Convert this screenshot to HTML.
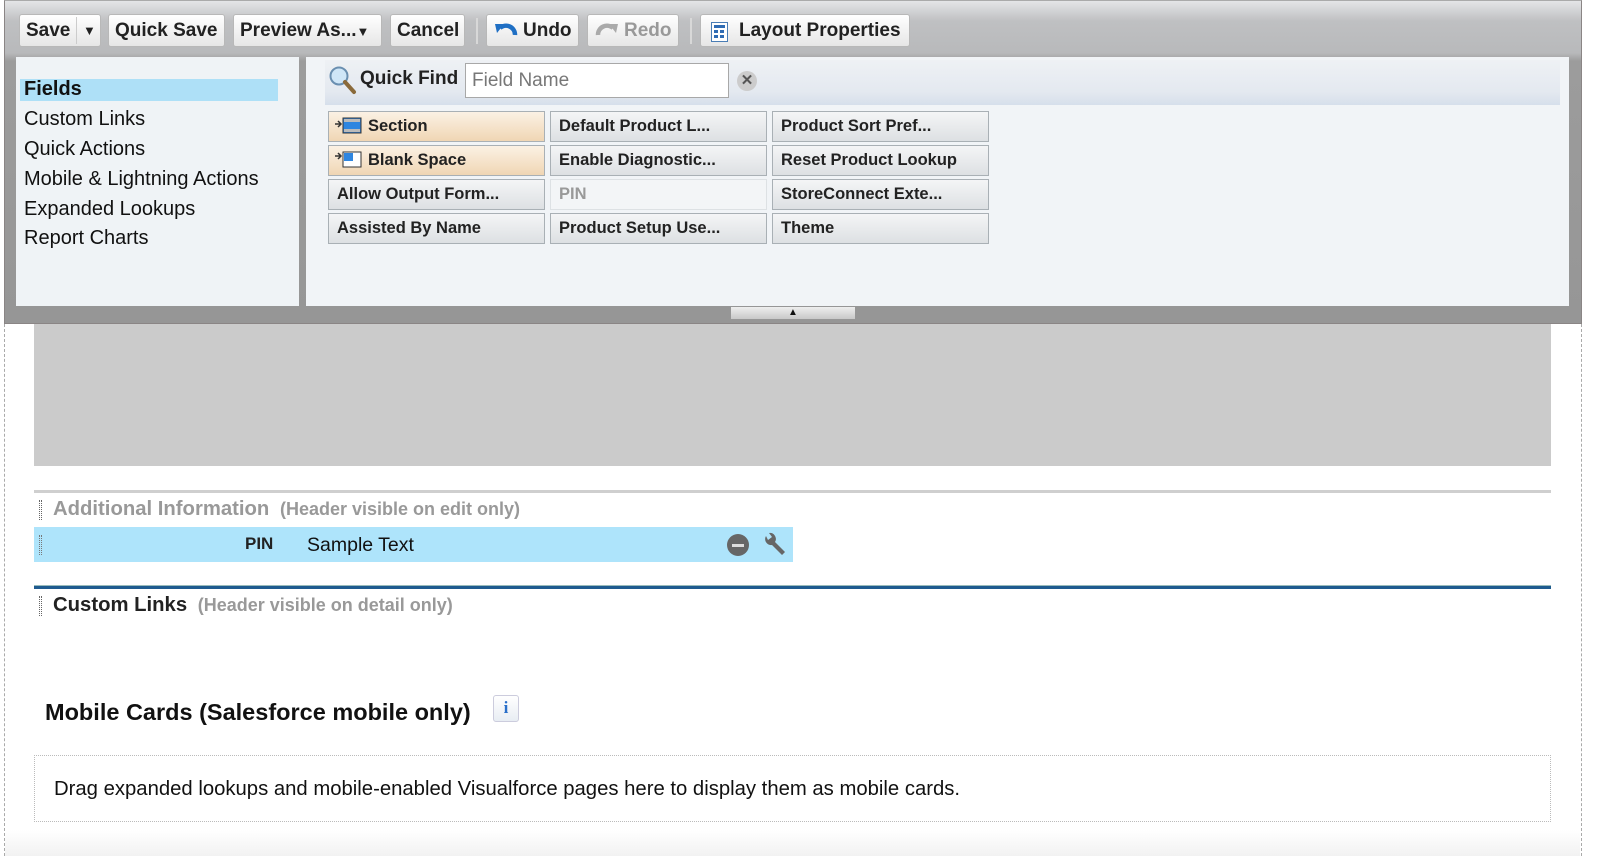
<!DOCTYPE html>
<html><head><meta charset="utf-8"><style>
*{box-sizing:border-box;margin:0;padding:0}
body{width:1600px;height:856px;background:#fff;font-family:"Liberation Sans",sans-serif;position:relative;overflow:hidden}
.a{position:absolute}
.frame{left:4px;top:0;width:1578px;height:324px;background:linear-gradient(#e4e5e7,#bfc0c2 20px,#b8b9bb 52px,#9c9c9c 60px,#969696);border:1px solid #8a8585;border-top-color:#aaa}
.btn{position:absolute;top:14px;height:33px;background:linear-gradient(#fff,#e6e6e6);border:1px solid #b8b8b8;border-radius:3px;font-weight:bold;font-size:19px;color:#222;line-height:31px;padding-left:6px;white-space:nowrap}
.lp{left:16px;top:57px;width:283px;height:249px;background:#eff3f6}
.rp{left:306px;top:57px;width:1263px;height:249px;background:#f1f4f7}
.li{position:absolute;left:24px;font-size:20px;color:#111}
.cell{position:absolute;width:217px;height:31px;border:1px solid #a9b0b5;background:linear-gradient(#f4f5f6,#dde0e3);font-weight:bold;font-size:16.5px;color:#222;line-height:29px;padding-left:8px;white-space:nowrap}
.or{background:linear-gradient(#fbf1e4,#f0d6b4)}
</style></head><body>
<div class="a frame"></div>
<div class="btn" style="left:19px;width:82px">Save<span style="position:absolute;left:56px;top:2px;width:1px;height:27px;background:#ccc"></span><span style="position:absolute;left:63px;font-size:13px">▼</span></div>
<div class="btn" style="left:108px;width:117px">Quick Save</div>
<div class="btn" style="left:233px;width:149px">Preview As...<span style="font-size:13px">▼</span></div>
<div class="btn" style="left:390px;width:75px">Cancel</div>
<div class="a" style="left:476px;top:18px;width:2px;height:26px;background:#d8d8d8"></div>
<div class="btn" style="left:486px;width:93px;padding-left:36px"><svg class="a" style="left:6px;top:6px" width="26" height="22" viewBox="0 0 26 22"><path d="M22 14 A9 9 0 0 0 7 7" stroke="#1f6fc4" stroke-width="4.5" fill="none"/><path d="M2 3 L11 3 L4 12 Z" fill="#1f6fc4"/></svg>Undo</div>
<div class="btn" style="left:587px;width:92px;padding-left:36px;color:#999"><svg class="a" style="left:6px;top:6px" width="26" height="22" viewBox="0 0 26 22"><path d="M4 14 A9 9 0 0 1 19 7" stroke="#aaa" stroke-width="4.5" fill="none"/><path d="M24 3 L15 3 L22 12 Z" fill="#aaa"/></svg>Redo</div>
<div class="a" style="left:690px;top:18px;width:2px;height:26px;background:#d8d8d8"></div>
<div class="btn" style="left:700px;width:210px;padding-left:38px"><svg class="a" style="left:10px;top:7px" width="17" height="20"><rect x="0.5" y="0.5" width="16" height="19" fill="#fff" stroke="#4a7db5"/><rect x="3" y="3" width="11" height="3" fill="#2f6cb4"/><rect x="3" y="8" width="4" height="3" fill="#2f6cb4"/><rect x="9" y="8" width="4" height="3" fill="#2f6cb4"/><rect x="3" y="13" width="4" height="3" fill="#2f6cb4"/><rect x="9" y="13" width="4" height="3" fill="#2f6cb4"/></svg>Layout Properties</div>

<div class="a lp"></div>
<div class="a" style="left:20px;top:79px;width:258px;height:22px;background:#aee0f7"></div>
<div class="li" style="top:78px;font-weight:bold">Fields</div>
<div class="li" style="top:108px">Custom Links</div>
<div class="li" style="top:138px">Quick Actions</div>
<div class="li" style="top:168px">Mobile &amp; Lightning Actions</div>
<div class="li" style="top:198px">Expanded Lookups</div>
<div class="li" style="top:227px">Report Charts</div>

<div class="a rp"></div>
<div class="a" style="left:325px;top:60px;width:1235px;height:45px;background:linear-gradient(#eef1f4,#e4e9f0 70%,#d6dfeb)"></div>
<svg class="a" style="left:328px;top:65px" width="30" height="30"><circle cx="11" cy="11" r="8.5" fill="#cfe6f7" stroke="#6a8fb0" stroke-width="2"/><path d="M17 17 L26 27" stroke="#8a6a3a" stroke-width="4" stroke-linecap="round"/></svg>
<div class="a" style="left:360px;top:68px;font-size:19px;font-weight:bold;color:#222">Quick Find</div>
<div class="a" style="left:465px;top:63px;width:264px;height:35px;background:#fff;border:1px solid #a8a8a8;font-size:19px;color:#777;padding:6px 0 0 6px">Field Name</div>
<div class="a" style="left:737px;top:71px;width:20px;height:20px;border-radius:50%;background:#ccc;color:#555;font-size:15px;font-weight:bold;text-align:center;line-height:20px">✕</div>

<div class="cell or" style="left:328px;top:111px;padding-left:5px"><svg width="34" height="18" style="vertical-align:-3px"><path d="M1 8 H6 M4 5 L7 8 L4 11" stroke="#333" stroke-width="1.5" fill="none"/><rect x="9" y="2" width="18" height="15" fill="#2f86e0" stroke="#333"/><rect x="10" y="3" width="16" height="3" fill="#bbb"/><rect x="10" y="13" width="16" height="3" fill="#bbb"/></svg>Section</div>
<div class="cell or" style="left:328px;top:145px;padding-left:5px"><svg width="34" height="18" style="vertical-align:-3px"><path d="M1 6 H6 M4 3 L7 6 L4 9" stroke="#333" stroke-width="1.5" fill="none"/><rect x="9" y="2" width="18" height="15" fill="#fff" stroke="#333"/><rect x="10" y="3" width="9" height="8" fill="#2f86e0"/></svg>Blank Space</div>
<div class="cell" style="left:328px;top:179px">Allow Output Form...</div>
<div class="cell" style="left:328px;top:213px">Assisted By Name</div>
<div class="cell" style="left:550px;top:111px">Default Product L...</div>
<div class="cell" style="left:550px;top:145px">Enable Diagnostic...</div>
<div class="cell" style="left:550px;top:179px;background:#f3f5f7;border-color:#dde1e4;color:#999">PIN</div>
<div class="cell" style="left:550px;top:213px">Product Setup Use...</div>
<div class="cell" style="left:772px;top:111px">Product Sort Pref...</div>
<div class="cell" style="left:772px;top:145px">Reset Product Lookup</div>
<div class="cell" style="left:772px;top:179px">StoreConnect Exte...</div>
<div class="cell" style="left:772px;top:213px">Theme</div>
<div class="a" style="left:731px;top:307px;width:124px;height:12px;background:linear-gradient(#eee,#c8c8c8);font-size:10px;text-align:center;line-height:12px;color:#111">▲</div>

<div class="a" style="left:4px;top:324px;width:0;height:532px;border-left:1px dashed #aaa"></div>
<div class="a" style="left:1581px;top:324px;width:0;height:532px;border-left:1px dashed #aaa"></div>
<div class="a" style="left:34px;top:324px;width:1517px;height:142px;background:#cbcbcb"></div>
<div class="a" style="left:34px;top:490px;width:1517px;height:3px;background:#cfcfcf"></div>
<div class="a" style="left:39px;top:500px;width:3px;height:20px;border-left:1px dotted #666;border-right:1px dotted #666"></div>
<div class="a" style="left:53px;top:498px;font-size:20.3px;font-weight:bold;color:#999;white-space:nowrap">Additional Information <span style="font-size:18px">&nbsp;(Header visible on edit only)</span></div>
<div class="a" style="left:34px;top:527px;width:759px;height:35px;background:#aee4fb"></div>
<div class="a" style="left:39px;top:535px;width:3px;height:20px;border-left:1px dotted #777;border-right:1px dotted #777"></div>
<div class="a" style="left:245px;top:534px;font-size:17px;font-weight:bold;color:#222">PIN</div>
<div class="a" style="left:307px;top:534px;font-size:19.5px;color:#111">Sample Text</div>
<div class="a" style="left:727px;top:534px;width:22px;height:22px;border-radius:50%;background:#666"><div style="margin:10px 5px;height:3px;background:#ddd"></div></div>
<svg class="a" style="left:762px;top:532px" width="26" height="26"><path d="M4 4 a6 6 0 0 0 6 9 L20 23 L23 20 L13 10 a6 6 0 0 0 -6 -9 L10 5 L6 8 Z" fill="#666"/></svg>
<div class="a" style="left:34px;top:585px;width:1517px;height:4px;background:#1f5b8f;border-top:1px solid #9bb"></div>
<div class="a" style="left:39px;top:596px;width:3px;height:20px;border-left:1px dotted #666;border-right:1px dotted #666"></div>
<div class="a" style="left:53px;top:594px;font-size:20.3px;font-weight:bold;color:#222;white-space:nowrap">Custom Links <span style="font-size:18px;color:#999">&nbsp;(Header visible on detail only)</span></div>
<div class="a" style="left:45px;top:699px;font-size:23.5px;font-weight:bold;color:#111;white-space:nowrap">Mobile Cards (Salesforce mobile only)</div>
<div class="a" style="left:493px;top:695px;width:26px;height:27px;border:1px solid #ccd;border-radius:3px;background:linear-gradient(#fff,#e8edf3);color:#2a6fc9;font-family:'Liberation Serif',serif;font-weight:bold;font-size:17px;text-align:center;line-height:24px">i</div>
<div class="a" style="left:34px;top:755px;width:1517px;height:67px;border:1px dotted #bbb"></div>
<div class="a" style="left:54px;top:778px;font-size:20.3px;color:#111;white-space:nowrap">Drag expanded lookups and mobile-enabled Visualforce pages here to display them as mobile cards.</div>
<div class="a" style="left:5px;top:830px;width:1575px;height:26px;background:linear-gradient(#fff,#f2f2f2)"></div>
</body></html>
